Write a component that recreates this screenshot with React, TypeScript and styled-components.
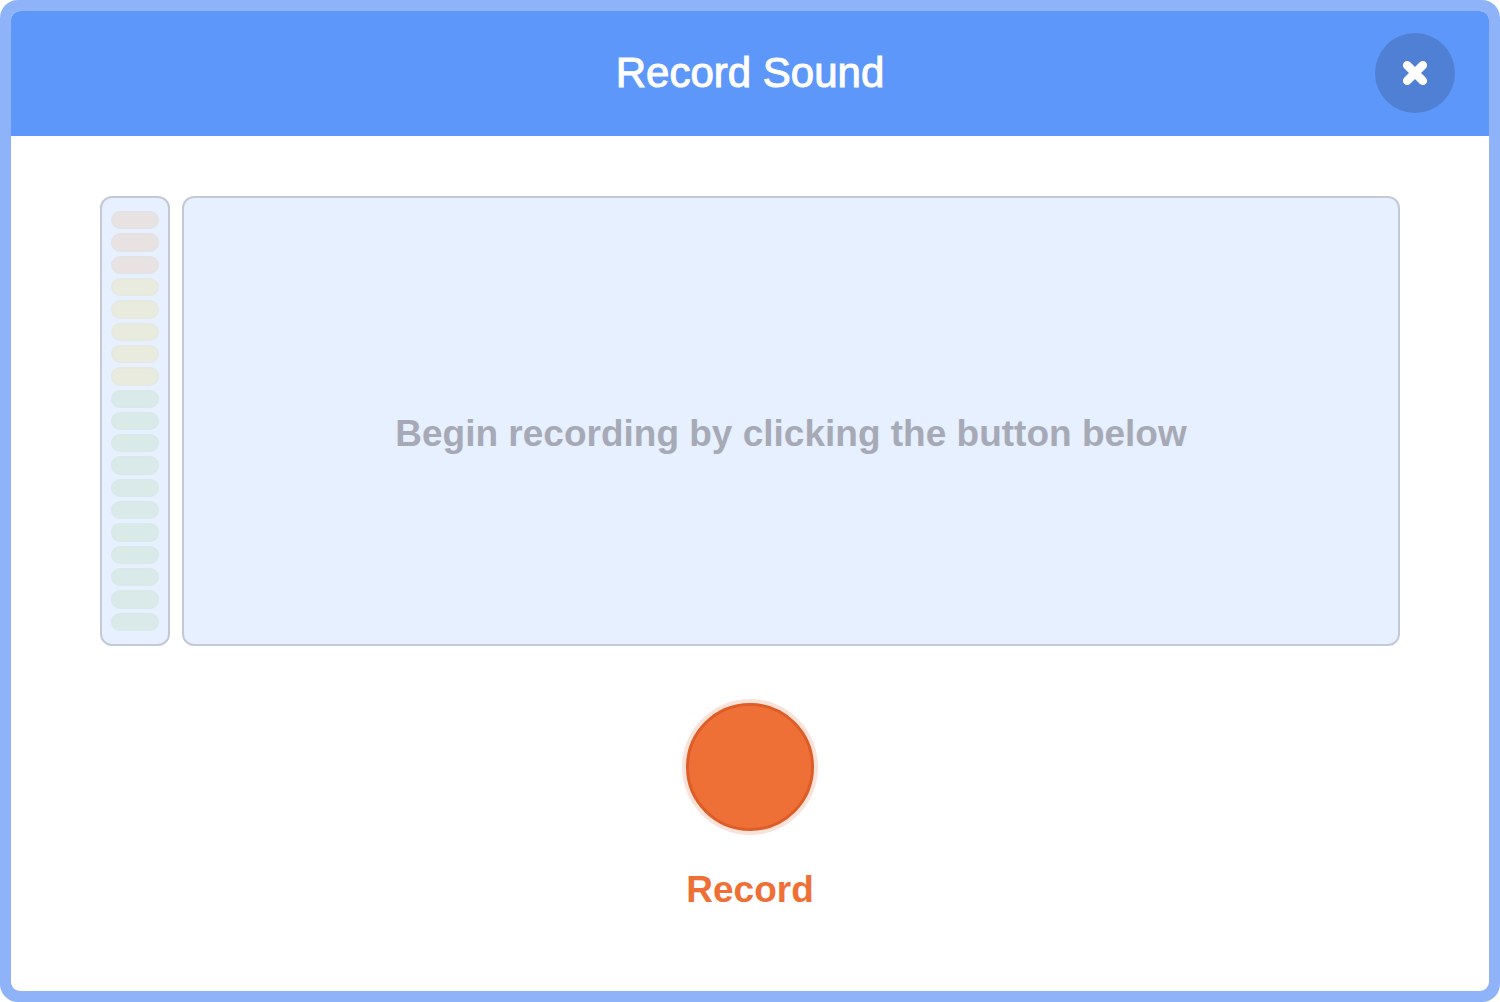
import React from "react";
import styled, { createGlobalStyle } from "styled-components";

const GlobalStyle = createGlobalStyle`
  * {
    box-sizing: border-box;
  }
  body {
    margin: 0;
    background: #ffffff;
    font-family: "Liberation Sans", Arial, sans-serif;
  }
`;

const Frame = styled.div`
  display: flex;
  min-height: 100vh;
  padding: 11px;
  border-radius: 18px;
  background: #8fb3f9;
`;

const Dialog = styled.main`
  display: flex;
  flex: 1;
  flex-direction: column;
  overflow: hidden;
  border-radius: 9px;
  background: #ffffff;
`;

const Header = styled.header`
  display: grid;
  grid-template-columns: 80px 1fr 80px;
  align-items: center;
  padding: 22px 34px 23px;
  background: #5e97fa;
`;

const Title = styled.h1`
  grid-column: 2;
  margin: 0;
  color: #ffffff;
  font-size: 42px;
  font-weight: 400;
  line-height: 48px;
  text-align: center;
  -webkit-text-stroke: 1px #ffffff;
`;

const CloseButton = styled.button`
  display: flex;
  align-items: center;
  justify-content: center;
  width: 80px;
  height: 80px;
  padding: 0;
  border: 0;
  border-radius: 50%;
  background: #5080d4;
  cursor: pointer;
`;

const Body = styled.section`
  display: flex;
  flex-direction: column;
  align-items: center;
  gap: 57px;
  padding: 60px 89px;
`;

const Visualization = styled.div`
  display: flex;
  align-self: stretch;
  gap: 12px;
  height: 450px;
`;

const Panel = styled.div`
  border: 2px solid #c3c9d9;
  border-radius: 12px;
  background: #e6f0ff;
`;

const Meter = styled(Panel)`
  display: flex;
  flex-direction: column;
  gap: 4px;
  width: 70px;
  padding: 13px 9px;
`;

const levels = {
  high: { fill: "#e8e3e2", edge: "#e4e2e3" },
  medium: { fill: "#e9ebdf", edge: "#e6e9e0" },
  low: { fill: "#daeae8", edge: "#d8e9e7" },
};

type Level = keyof typeof levels;

const Segment = styled.div<{ $level: Level }>`
  flex: 1;
  border: 2px solid ${({ $level }) => levels[$level].edge};
  border-radius: 9px;
  background: ${({ $level }) => levels[$level].fill};
`;

const Waveform = styled(Panel)`
  display: flex;
  flex: 1;
  align-items: center;
  justify-content: center;
  padding: 26px 24px 0;
`;

const Message = styled.p`
  margin: 0;
  color: #a7aab6;
  font-size: 37px;
  font-weight: 700;
  line-height: 42px;
  text-align: center;
`;

const RecordButton = styled.button`
  display: flex;
  flex-direction: column;
  align-items: center;
  gap: 38px;
  padding: 0;
  border: 0;
  background: none;
  color: #ee7037;
  font-family: inherit;
  font-size: 37px;
  font-weight: 700;
  line-height: 42px;
  cursor: pointer;
`;

const RecordDot = styled.span`
  width: 128px;
  height: 128px;
  border: 3px solid #dd5d28;
  border-radius: 50%;
  background: #ee7037;
  box-shadow: 0 0 0 4px #fbe2d8;
`;

const segments: Level[] = [
  ...Array<Level>(3).fill("high"),
  ...Array<Level>(5).fill("medium"),
  ...Array<Level>(11).fill("low"),
];

export default function App() {
  return (
    <>
      <GlobalStyle />
      <Frame>
        <Dialog aria-labelledby="dialog-title">
          <Header>
            <Title id="dialog-title">Record Sound</Title>
            <CloseButton type="button" aria-label="Close">
              <svg width="26" height="26" viewBox="0 0 26 26" aria-hidden="true">
                <path
                  d="M5.2 5.2 L20.8 20.8 M20.8 5.2 L5.2 20.8"
                  stroke="#ffffff"
                  strokeWidth="8.6"
                  strokeLinecap="round"
                />
              </svg>
            </CloseButton>
          </Header>
          <Body>
            <Visualization>
              <Meter aria-hidden="true">
                {segments.map((level, index) => (
                  <Segment key={index} $level={level} />
                ))}
              </Meter>
              <Waveform>
                <Message>Begin recording by clicking the button below</Message>
              </Waveform>
            </Visualization>
            <RecordButton type="button">
              <RecordDot />
              Record
            </RecordButton>
          </Body>
        </Dialog>
      </Frame>
    </>
  );
}
